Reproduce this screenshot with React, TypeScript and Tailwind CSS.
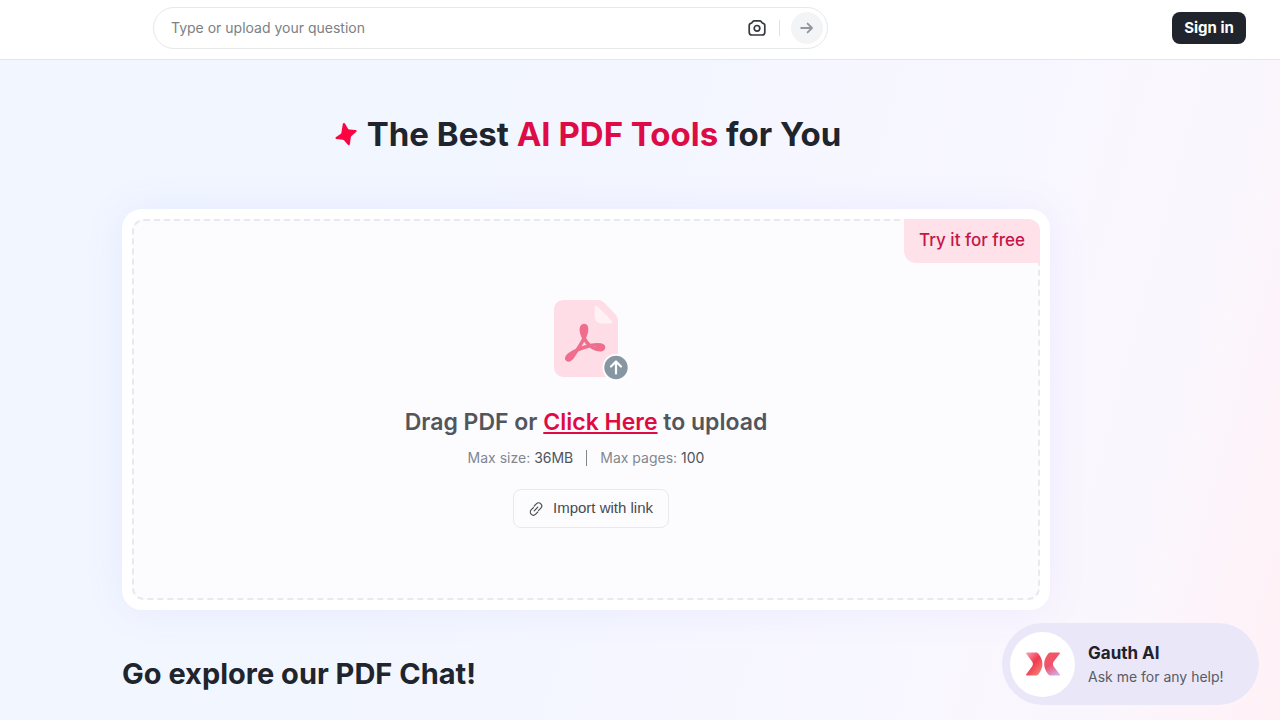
import React from "react";

function CameraIcon() {
  return (
    <svg width="18" height="18" viewBox="0 0 18 18" fill="none" stroke="#363a40" strokeWidth="1.7" strokeLinejoin="round" aria-hidden="true">
      <path d="M6.1 1.9h5.8c.5 0 .9.2 1.2.6l.8 1.1c.2.3.5.4.8.5 1.300.3 2.100 1.200 2.100 2.500v6.600c0 1.800-1 2.800-2.800 2.800H4c-1.800 0-2.800-1-2.800-2.800V6.600c0-1.300.8-2.200 2.100-2.500.3-.1.6-.2.8-.5l.8-1.100c.3-.4.7-.6 1.200-.6z" />
      <circle cx="9" cy="9.300" r="2.800" />
    </svg>
  );
}

function ArrowIcon() {
  return (
    <svg width="14" height="14" viewBox="0 0 14 14" fill="none" stroke="#9296a0" strokeWidth="1.900" strokeLinecap="round" strokeLinejoin="round" aria-hidden="true">
      <path d="M1.200 7h10.600M7.600 2.600 12 7l-4.400 4.400" />
    </svg>
  );
}

function SparkIcon() {
  return (
    <svg width="22" height="24" viewBox="0 0 22 24" fill="#fb0442" aria-hidden="true">
      <path d="M7.800 1.900c.3-1.200 1.700-1.300 2.300-.2l2.900 5.100c.3.500.7.700 1.200.7l6.200.5c1.300.1 1.700 1.300.7 2.100l-4.600 4c-.4.400-.6.800-.7 1.300l-.9 6.600c-.2 1.500-1.400 1.700-2.300.6l-3.600-4.300c-.3-.4-.7-.6-1.200-.6l-6-.6c-1.500-.2-1.800-1.500-.6-2.200l4.300-2.900c.5-.3.800-.7.900-1.300z" />
    </svg>
  );
}

function PdfUploadIcon() {
  return (
    <svg width="76" height="82" viewBox="0 0 76 82" fill="none" aria-hidden="true">
      <path d="M11 1h33.500c2.700 0 5.200 1.100 7.100 3l10.500 11c1.900 2 2.900 4.400 2.900 7.100V68c0 6-4 10-10 10H11C5 78 1 74 1 68V11C1 5 5 1 11 1z" fill="#ffdde6" />
      <path d="M41.500 9c0-1.900 2-2.600 3.400-1.200l13.600 13.600c1.200 1.300.5 3.100-1.500 3.100h-8c-4.500 0-7.500-3-7.500-7.500z" fill="#fff1f4" />
      <path d="M31 26.500c-2.200 0-2.900 2.500-2.500 5.500.9 7.500 8 16.500 15.500 18.300 3.800.9 6.500.2 6.500-2s-2.500-2.500-6-2.500C36 46 23 50.500 16.500 55.500c-2.300 1.800-3.400 3.700-2.200 4.800s3.400.4 5-2C24 51 31.800 41 33.300 33c.6-3.500.2-6.500-2.300-6.500z" stroke="#ef6d8d" strokeWidth="3.600" strokeLinejoin="round" />
      <path d="M31 27.500v5M44.500 48.200h4.500M16 58.500l3.500-3.500" stroke="#ef6d8d" strokeWidth="3.600" strokeLinecap="round" />
      <circle cx="63" cy="68.500" r="13.500" fill="#fff" />
      <circle cx="63" cy="68.500" r="11.700" fill="#8796a3" />
      <path d="M63 74.500V63M58 67.500l5-5 5 5" stroke="#fff" strokeWidth="2.200" strokeLinecap="round" strokeLinejoin="round" />
    </svg>
  );
}

function LinkIcon() {
  return (
    <svg width="14" height="14" viewBox="0 0 14 14" fill="none" stroke="#474b51" strokeWidth="1.200" strokeLinecap="round" aria-hidden="true">
      <path d="M5.100 4.100 7.300 1.900c1.300-1.300 3.300-1.300 4.500-.1s1.200 3.200-.1 4.500L9.600 8.400" />
      <path d="M8.900 9.900l-2.200 2.200c-1.300 1.300-3.300 1.300-4.500.1s-1.200-3.200.1-4.500l2.100-2.100" />
      <path d="M5.200 8.800l3.600-3.600" />
    </svg>
  );
}

function GauthLogo() {
  return (
    <svg width="34" height="24" viewBox="0 0 34 24" aria-hidden="true">
      <defs>
        <linearGradient id="logo-left" x1="0" y1="0" x2=".8" y2="1">
          <stop offset="0" stopColor="#f5a3bb" />
          <stop offset=".5" stopColor="#f2384f" />
          <stop offset="1" stopColor="#f28278" />
        </linearGradient>
        <linearGradient id="logo-right" x1=".3" y1="0" x2=".7" y2="1">
          <stop offset="0" stopColor="#ef5b62" />
          <stop offset=".5" stopColor="#f0506c" />
          <stop offset="1" stopColor="#d4a9e2" />
        </linearGradient>
      </defs>
      <path d="M.8.500h9c1.200 0 2 .4 2.700 1.300 2.500 3.200 3.900 6.400 3.900 10.200s-1.400 7-3.900 10.200c-.7.900-1.500 1.300-2.700 1.300h-9c-.8 0-1-.7-.5-1.300l5.900-8c.9-1.400.9-3 0-4.400l-5.900-8C-.2 1.200 0 .5.800.500z" fill="url(#logo-left)" />
      <path d="M33.200.500h-8.400c-1.200 0-2 .4-2.700 1.300-2.500 3.200-3.900 6.400-3.900 10.200s1.400 7 3.900 10.200c.7.900 1.500 1.300 2.700 1.300h8.400c.8 0 1-.7.5-1.300l-6.100-8c-.9-1.400-.9-3 0-4.400l6.100-8c.5-.6.3-1.300-.5-1.300z" fill="url(#logo-right)" />
    </svg>
  );
}

function Header() {
  return (
    <header className="flex h-[60px] items-start justify-between border-b border-[#e3e5ee] bg-white pr-[34px] pl-[153px] pt-[7px]">
      <form role="search" onSubmit={(e) => e.preventDefault()} className="flex h-[42px] w-full max-w-[675px] items-center rounded-full border border-[#e7e8ea] pr-1 pl-[17px]">
        <input
          type="text"
          aria-label="Question"
          placeholder="Type or upload your question"
          className="min-w-0 flex-1 bg-transparent text-sm text-[#23262e] outline-none placeholder:text-[#7c7f84]"
        />
        <button type="button" aria-label="Upload a photo">
          <CameraIcon />
        </button>
        <span className="mr-[11px] ml-[13px] h-4 w-px bg-[#dfe1e4]" />
        <button type="submit" aria-label="Ask" className="flex size-8 items-center justify-center rounded-full bg-[#f3f4f6]">
          <ArrowIcon />
        </button>
      </form>
      <button type="button" className="mt-[5px] flex h-8 w-[74px] shrink-0 items-center justify-center rounded-lg bg-[#20242c] text-[15px] font-bold text-white">
        Sign in
      </button>
    </header>
  );
}

function UploadCard() {
  return (
    <section className="rounded-[20px] bg-white p-[10px] shadow-[0_0_40px_rgba(120,110,255,0.09)]">
      <div className="relative flex h-[381px] flex-col items-center rounded-xl border-2 border-dashed border-[#e8e9ee] bg-[#fcfcff] pt-[78px]">
        <span className="absolute -top-0.5 -right-0.5 flex h-11 items-center rounded-tr-xl rounded-bl-xl bg-[#ffe2e9] px-[15px] text-[17px] font-medium text-[#c41648]">
          Try it for free
        </span>
        <div className="pl-[10px]">
          <PdfUploadIcon />
        </div>
        <h2 className="mt-[25px] text-[23px] leading-8 font-semibold text-[#52565c]">
          Drag PDF or{" "}
          <a href="#upload" className="text-[#df0c43] underline decoration-2 underline-offset-2">
            Click Here
          </a>{" "}
          to upload
        </h2>
        <div className="mt-[10px] flex items-center text-sm leading-5 text-[#82878f]">
          <p>
            Max size: <span className="text-[#50545a]">36MB</span>
          </p>
          <span className="mx-[13px] h-4 w-px bg-[#82878f]" />
          <p>
            Max pages: <span className="text-[#50545a]">100</span>
          </p>
        </div>
        <button type="button" className="mt-[21px] ml-[10px] flex h-[39px] items-center gap-[10px] rounded-lg border border-[#e8e9ed] px-[15px] font-['Liberation_Sans',sans-serif] text-[15px] text-[#474b51]">
          <LinkIcon />
          Import with link
        </button>
      </div>
    </section>
  );
}

function ChatBubble() {
  return (
    <button type="button" className="fixed right-[21px] bottom-[15px] flex h-[82px] w-[257px] items-center gap-[13px] rounded-full bg-[#eae8f8] pl-2 text-left">
      <span className="flex size-[65px] items-center justify-center rounded-full bg-white">
        <GauthLogo />
      </span>
      <span className="flex flex-col pt-px">
        <span className="text-[17px] leading-6 font-bold text-[#20222c]">Gauth AI</span>
        <span className="text-sm leading-6 text-[#595b65]">Ask me for any help!</span>
      </span>
    </button>
  );
}

export default function App() {
  return (
    <div className="flex min-h-screen flex-col overflow-hidden bg-white font-[Inter,sans-serif]">
      <Header />
      <main className="flex-1 bg-[linear-gradient(105deg,#f1f6ff_0%,#f3f6ff_40%,#f8f7ff_72%,#fbf6fd_88%,#fff1f6_100%)] pr-[230px] pl-[122px]">
        <h1 className="mt-[52px] flex items-center justify-center gap-[10px] pl-1 text-[33px] leading-[44px] font-bold text-[#20242c]">
          <SparkIcon />
          <span>
            The Best <span className="text-[#dc0d46]">AI PDF Tools</span> for You
          </span>
        </h1>
        <div className="mt-[53px]">
          <UploadCard />
        </div>
        <h2 className="mt-11 mb-6 text-[29px] leading-10 font-bold text-[#20242c]">Go explore our PDF Chat!</h2>
      </main>
      <ChatBubble />
    </div>
  );
}
